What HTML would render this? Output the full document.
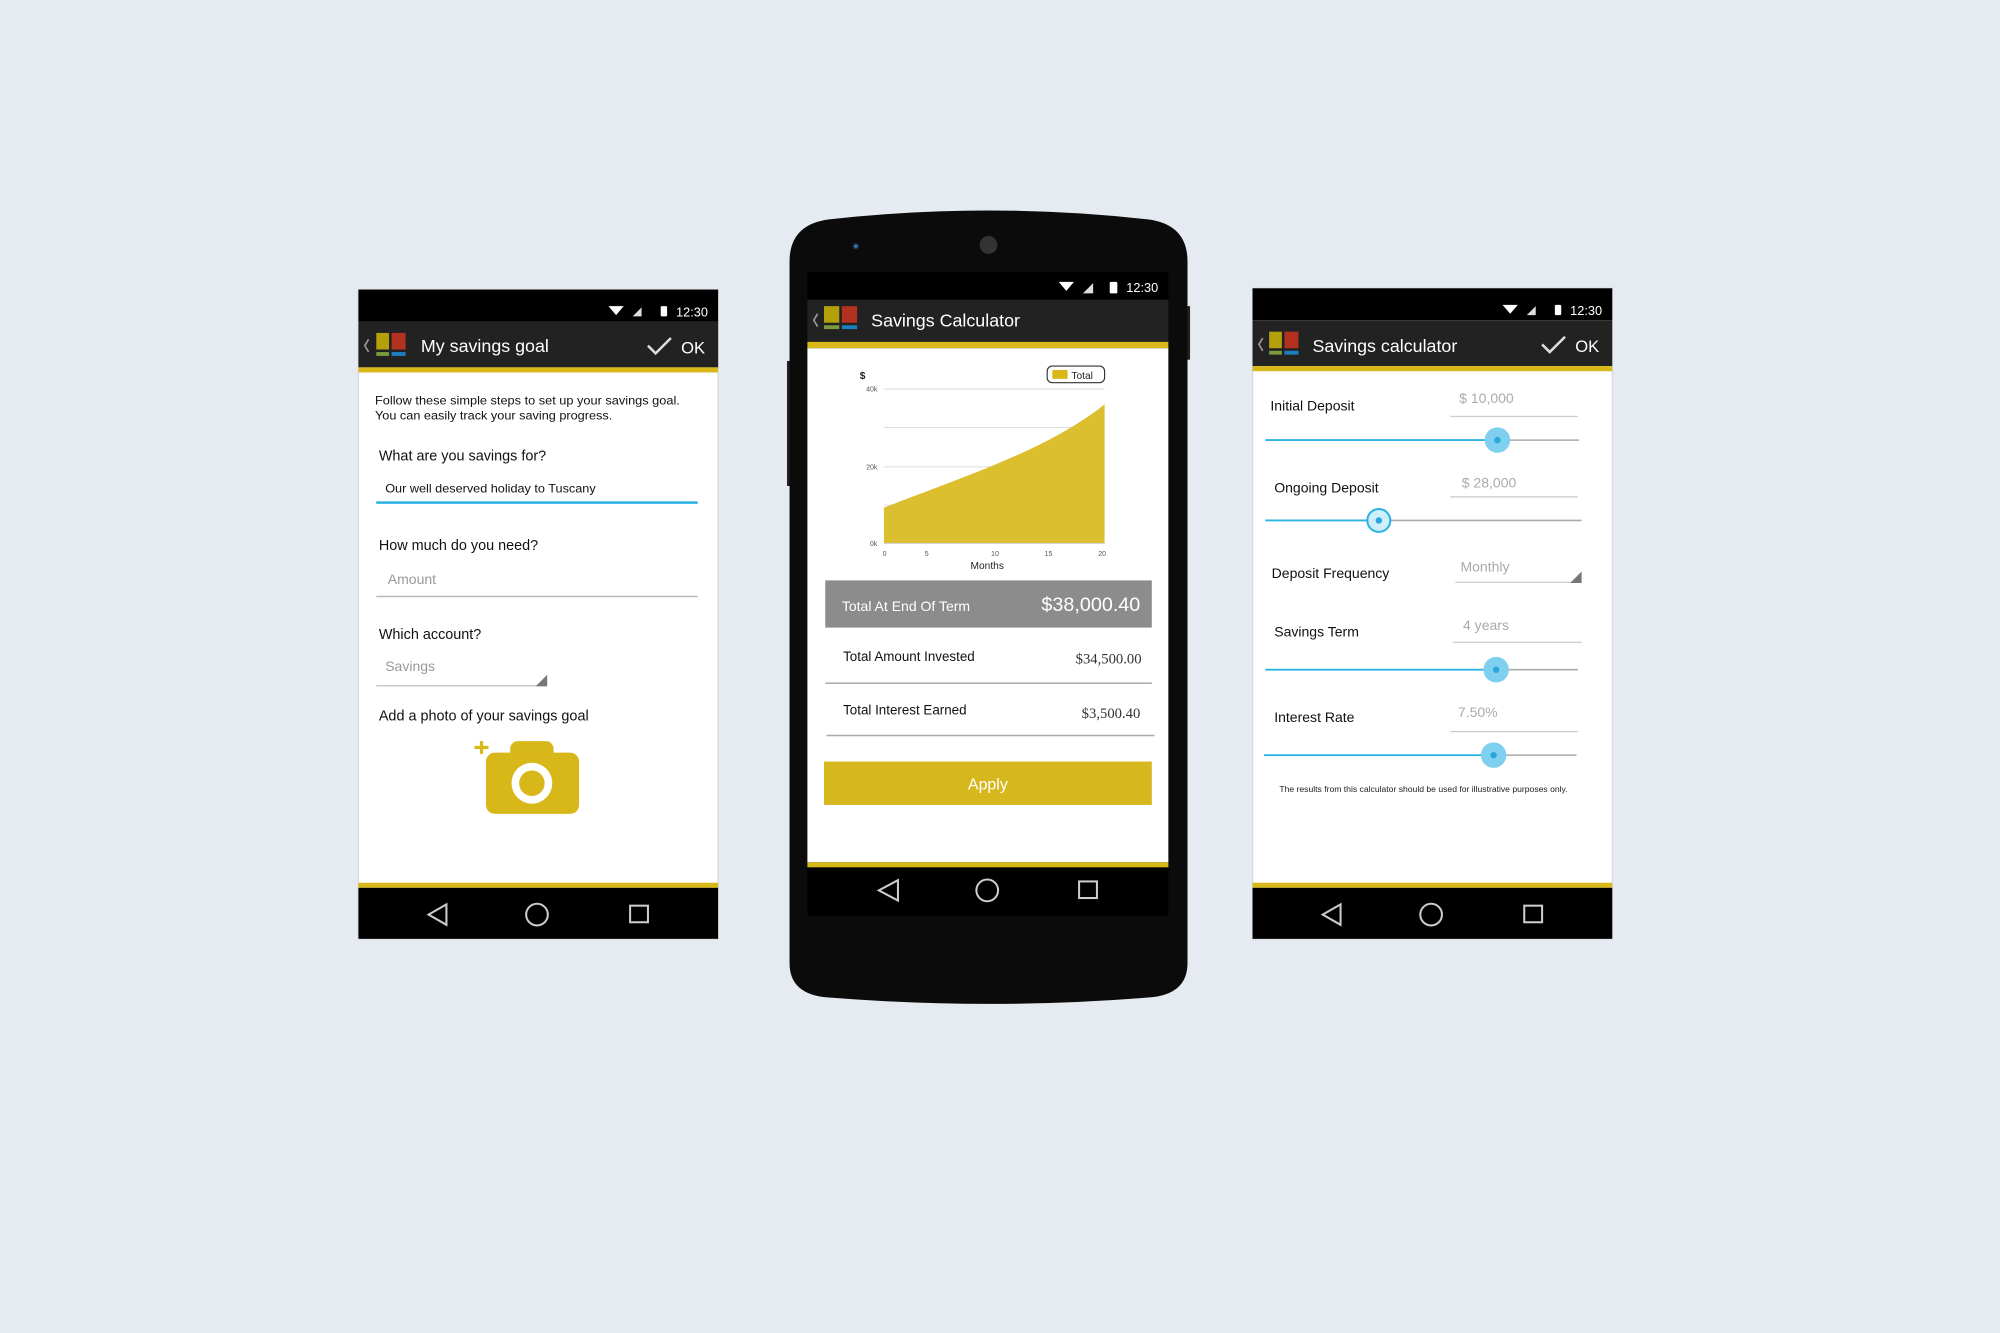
<!DOCTYPE html>
<html><head><meta charset="utf-8"><style>
html,body{margin:0;padding:0;background:#e6ebf2;}
svg{display:block;font-family:"Liberation Sans",sans-serif;}
</style></head><body>
<svg width="2000" height="1333" viewBox="0 0 1568 1045" preserveAspectRatio="none" xmlns="http://www.w3.org/2000/svg">
<rect width="1568" height="1045" fill="#e6ebf2"/>

<!-- LEFT PHONE -->
<g transform="translate(281,227)">
<rect width="282" height="509" fill="#fff" stroke="#d6d9de" stroke-width="1"/>
<rect width="282" height="25" fill="#000"/>
<polygon points="196,13 208,13 202,20" fill="#fff"/>
<polygon points="215,21 222,21 222,14" fill="#ddd"/>
<rect x="237" y="13" width="5" height="8" rx="1" fill="#fff"/>
<text x="249" y="21" font-size="10" fill="#fff">12:30</text>
<rect y="25" width="282" height="36" fill="#222"/>
<path d="M8,39 L5,44 L8,49" stroke="#999" stroke-width="1.3" fill="none"/>
<rect x="14" y="34" width="10" height="13" fill="#b3a00a"/>
<rect x="26" y="34" width="11" height="13" fill="#b2321f"/>
<rect x="14" y="49" width="10" height="3" fill="#7d9b3c"/>
<rect x="26" y="49" width="11" height="3" fill="#1b80c2"/>
<text x="49" y="49" font-size="14" fill="#fff">My savings goal</text>
<path d="M227,44 L233,50 L245,38" stroke="#ddd" stroke-width="2" fill="none"/>
<text x="253" y="50" font-size="13" fill="#fff">OK</text>
<rect y="61" width="282" height="4" fill="#d8b719"/>
<text x="13" y="90" font-size="9.3" fill="#111" textLength="239" lengthAdjust="spacingAndGlyphs">Follow these simple steps to set up your savings goal.</text>
<text x="13" y="102" font-size="9.3" fill="#111" textLength="186" lengthAdjust="spacingAndGlyphs">You can easily track your saving progress.</text>
<text x="16" y="134" font-size="11.3" fill="#111">What are you savings for?</text>
<text x="21" y="159" font-size="9.3" fill="#111" textLength="165" lengthAdjust="spacingAndGlyphs">Our well deserved holiday to Tuscany</text>
<rect x="14" y="166" width="252" height="2" fill="#2bb3e3"/>
<text x="16" y="204" font-size="11.3" fill="#111">How much do you need?</text>
<text x="23" y="231" font-size="11" fill="#999">Amount</text>
<rect x="14" y="240" width="252" height="1.2" fill="#bbb"/>
<text x="16" y="274" font-size="11.3" fill="#111">Which account?</text>
<text x="21" y="299" font-size="11" fill="#999">Savings</text>
<rect x="14" y="310" width="133" height="1.2" fill="#ccc"/>
<polygon points="139,311 148,311 148,302" fill="#777"/>
<text x="16" y="338" font-size="11.3" fill="#111">Add a photo of your savings goal</text>
<rect x="119" y="354" width="34" height="16" rx="6" fill="#d8b719"/>
<rect x="100" y="363" width="73" height="48" rx="7" fill="#d8b719"/>
<circle cx="136" cy="387" r="16" fill="#fff"/>
<circle cx="136" cy="387" r="10" fill="#d8b719"/>
<path d="M91,359 H102 M96.5,354 V364" stroke="#d8b719" stroke-width="2.5"/>
<rect y="465" width="282" height="4" fill="#d8b719"/>
<rect y="469" width="282" height="40" fill="#000"/>
<path d="M69,482 L55,490 L69,498 Z" stroke="#ccc" stroke-width="1.6" fill="none"/>
<circle cx="140" cy="490" r="8.5" stroke="#ccc" stroke-width="1.6" fill="none"/>
<rect x="213" y="483" width="14" height="13" stroke="#ccc" stroke-width="1.6" fill="none"/>
</g>

<!-- CENTER PHONE -->
<rect x="617" y="283" width="4" height="98" fill="#222"/>
<rect x="929" y="240" width="4" height="42" fill="#222"/>
<path d="M650,172 Q775,158 900,172 Q931,176 931,205 L931,755 Q931,780 900,782 Q775,792 650,782 Q619,780 619,755 L619,205 Q619,176 650,172 Z" fill="#0b0b0b"/>
<circle cx="671" cy="193" r="2.5" fill="#234"/>
<circle cx="671" cy="193" r="1" fill="#39f"/>
<circle cx="775" cy="192" r="7" fill="#333"/>
<rect x="633" y="213" width="283" height="22" fill="#000"/>
<polygon points="830,221 842,221 836,228" fill="#fff"/>
<polygon points="849,230 857,230 857,222" fill="#ddd"/>
<rect x="870" y="221" width="6" height="9" rx="1" fill="#fff"/>
<text x="883" y="229" font-size="10" fill="#fff">12:30</text>
<rect x="633" y="235" width="283" height="33" fill="#222"/>
<path d="M641,246 L638,251 L641,256" stroke="#999" stroke-width="1.3" fill="none"/>
<rect x="646" y="240" width="12" height="13" fill="#b3a00a"/>
<rect x="660" y="240" width="12" height="13" fill="#b2321f"/>
<rect x="646" y="255" width="12" height="3" fill="#7d9b3c"/>
<rect x="660" y="255" width="12" height="3" fill="#1b80c2"/>
<text x="683" y="256" font-size="14" fill="#fff">Savings Calculator</text>
<rect x="633" y="268" width="283" height="5" fill="#d8b719"/>
<rect x="633" y="273" width="283" height="403" fill="#fff"/>
<!-- chart -->
<g stroke="#ddd" stroke-width="0.8">
<line x1="693" y1="305" x2="866" y2="305"/>
<line x1="693" y1="335" x2="866" y2="335"/>
<line x1="693" y1="366" x2="866" y2="366"/>
<line x1="693" y1="396" x2="866" y2="396"/>
</g>
<path d="M693,398 C760,372 822,352 866,317 L866,426 L693,426 Z" fill="#dbbf2e"/>
<line x1="693" y1="426" x2="866" y2="426" stroke="#ccc" stroke-width="0.8"/>
<text x="674" y="297" font-size="8" font-weight="bold" fill="#222">$</text>
<g font-size="5.5" fill="#555">
<text x="679" y="307">40k</text><text x="679" y="368">20k</text><text x="682" y="428">0k</text>
<text x="692" y="436">0</text><text x="725" y="436">5</text><text x="777" y="436">10</text><text x="819" y="436">15</text><text x="861" y="436">20</text>
</g>
<text x="774" y="446" font-size="8" fill="#222" text-anchor="middle">Months</text>
<rect x="821" y="287" width="45" height="13" rx="4" fill="#fff" stroke="#333" stroke-width="0.9"/>
<rect x="825" y="290" width="12" height="7" fill="#d8b719"/>
<text x="840" y="297" font-size="8" fill="#222">Total</text>
<rect x="647" y="455" width="256" height="37" fill="#8c8c8c"/>
<text x="660" y="479" font-size="11" fill="#fff">Total At End Of Term</text>
<text x="894" y="479" font-size="15.5" fill="#fff" text-anchor="end">$38,000.40</text>
<text x="661" y="518" font-size="10.5" fill="#111">Total Amount Invested</text>
<text x="895" y="520" font-size="11.5" fill="#333" text-anchor="end" font-family="Liberation Serif,serif">$34,500.00</text>
<rect x="647" y="535" width="256" height="1.2" fill="#aaa"/>
<text x="661" y="560" font-size="10.5" fill="#111">Total Interest Earned</text>
<text x="894" y="563" font-size="11.5" fill="#333" text-anchor="end" font-family="Liberation Serif,serif">$3,500.40</text>
<rect x="648" y="576" width="257" height="1.2" fill="#aaa"/>
<rect x="646" y="597" width="257" height="34" fill="#d6b71d"/>
<text x="774.5" y="619" font-size="12.5" fill="#fff" text-anchor="middle">Apply</text>
<rect x="633" y="676" width="283" height="4" fill="#d8b719"/>
<rect x="633" y="680" width="283" height="38" fill="#000"/>
<path d="M704,690 L689,698 L704,706 Z" stroke="#ccc" stroke-width="1.6" fill="none"/>
<circle cx="774" cy="698" r="8.5" stroke="#ccc" stroke-width="1.6" fill="none"/>
<rect x="846" y="691" width="14" height="13" stroke="#ccc" stroke-width="1.6" fill="none"/>

<!-- RIGHT PHONE -->
<g transform="translate(982,226)">
<rect width="282" height="510" fill="#fff" stroke="#d6d9de" stroke-width="1"/>
<rect width="282" height="25" fill="#000"/>
<polygon points="196,13 208,13 202,20" fill="#fff"/>
<polygon points="215,21 222,21 222,14" fill="#ddd"/>
<rect x="237" y="13" width="5" height="8" rx="1" fill="#fff"/>
<text x="249" y="21" font-size="10" fill="#fff">12:30</text>
<rect y="25" width="282" height="36" fill="#222"/>
<path d="M8,39 L5,44 L8,49" stroke="#999" stroke-width="1.3" fill="none"/>
<rect x="13" y="34" width="10" height="13" fill="#b3a00a"/>
<rect x="25" y="34" width="11" height="13" fill="#b2321f"/>
<rect x="13" y="49" width="10" height="3" fill="#7d9b3c"/>
<rect x="25" y="49" width="11" height="3" fill="#1b80c2"/>
<text x="47" y="50" font-size="14" fill="#fff">Savings calculator</text>
<path d="M227,44 L233,50 L245,38" stroke="#ddd" stroke-width="2" fill="none"/>
<text x="253" y="50" font-size="13" fill="#fff">OK</text>
<rect y="61" width="282" height="4" fill="#d8b719"/>
<g font-size="11" fill="#111">
<text x="14" y="96">Initial Deposit</text>
<text x="17" y="160">Ongoing Deposit</text>
<text x="15" y="227">Deposit Frequency</text>
<text x="17" y="273">Savings Term</text>
<text x="17" y="340">Interest Rate</text>
</g>
<g font-size="11" fill="#aaa">
<text x="162" y="90">$ 10,000</text>
<text x="164" y="156">$ 28,000</text>
<text x="163" y="222">Monthly</text>
<text x="165" y="268">4 years</text>
<text x="161" y="336">7.50%</text>
</g>
<g fill="#ccc">
<rect x="155" y="100" width="100" height="1"/>
<rect x="155" y="163" width="100" height="1"/>
<rect x="159" y="230" width="99" height="1"/>
<rect x="157" y="277" width="101" height="1"/>
<rect x="155" y="347" width="100" height="1"/>
</g>
<polygon points="249,231 258,231 258,222" fill="#777"/>
<!-- sliders -->
<line x1="10" y1="119" x2="192" y2="119" stroke="#2bb3e3" stroke-width="1.5"/>
<line x1="192" y1="119" x2="256" y2="119" stroke="#aaa" stroke-width="1.2"/>
<circle cx="192" cy="119" r="10" fill="#7fd0ef"/><circle cx="192" cy="119" r="2.5" fill="#2aa6dc"/>
<line x1="10" y1="182" x2="99" y2="182" stroke="#2bb3e3" stroke-width="1.5"/>
<line x1="99" y1="182" x2="258" y2="182" stroke="#aaa" stroke-width="1.2"/>
<circle cx="99" cy="182" r="9" fill="#cdeefa" stroke="#2bb3e3" stroke-width="1.6"/><circle cx="99" cy="182" r="2.5" fill="#2aa6dc"/>
<line x1="10" y1="299" x2="191" y2="299" stroke="#2bb3e3" stroke-width="1.5"/>
<line x1="191" y1="299" x2="255" y2="299" stroke="#aaa" stroke-width="1.2"/>
<circle cx="191" cy="299" r="10" fill="#7fd0ef"/><circle cx="191" cy="299" r="2.5" fill="#2aa6dc"/>
<line x1="9" y1="366" x2="189" y2="366" stroke="#2bb3e3" stroke-width="1.5"/>
<line x1="189" y1="366" x2="254" y2="366" stroke="#aaa" stroke-width="1.2"/>
<circle cx="189" cy="366" r="10" fill="#7fd0ef"/><circle cx="189" cy="366" r="2.5" fill="#2aa6dc"/>
<text x="21" y="395" font-size="6.3" fill="#222" textLength="226" lengthAdjust="spacingAndGlyphs">The results from this calculator should be used for illustrative purposes only.</text>
<rect y="466" width="282" height="4" fill="#d8b719"/>
<rect y="470" width="282" height="40" fill="#000"/>
<path d="M69,483 L55,491 L69,499 Z" stroke="#ccc" stroke-width="1.6" fill="none"/>
<circle cx="140" cy="491" r="8.5" stroke="#ccc" stroke-width="1.6" fill="none"/>
<rect x="213" y="484" width="14" height="13" stroke="#ccc" stroke-width="1.6" fill="none"/>
</g>
</svg>
</body></html>
